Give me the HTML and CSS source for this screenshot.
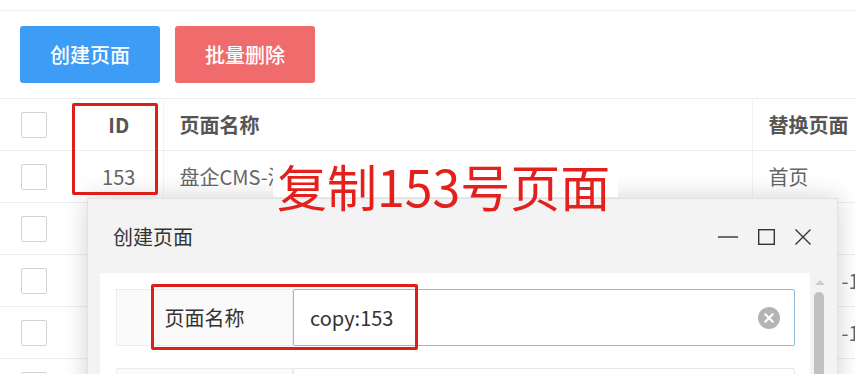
FILE: index.html
```html
<!DOCTYPE html>
<html lang="zh-CN">
<head>
<meta charset="utf-8">
<title>页面管理</title>
<link rel="stylesheet" href="styles.css">
</head>
<body>
<div class="page">
  <div class="topline"></div>
  <div class="toolbar">
    <button class="btn btn-blue">创建页面</button>
    <button class="btn btn-red">批量删除</button>
  </div>
  <table class="grid">
    <colgroup>
      <col class="c-check"><col class="c-id"><col class="c-name"><col class="c-rep">
    </colgroup>
    <thead>
      <tr>
        <th class="cell-check"><span class="checkbox"></span></th>
        <th class="cell-id">ID</th>
        <th class="cell-text">页面名称</th>
        <th class="cell-text">替换页面</th>
      </tr>
    </thead>
    <tbody>
      <tr>
        <td class="cell-check"><span class="checkbox"></span></td>
        <td class="cell-id">153</td>
        <td class="cell-text">盘企CMS-演示站首页</td>
        <td class="cell-text">首页</td>
      </tr>
      <tr>
        <td class="cell-check"><span class="checkbox"></span></td>
        <td class="cell-id">152</td>
        <td class="cell-text">盘企CMS-关于我们</td>
        <td class="cell-text">首页</td>
      </tr>
      <tr>
        <td class="cell-check"><span class="checkbox"></span></td>
        <td class="cell-id">151</td>
        <td class="cell-text">盘企CMS-新闻列表</td>
        <td class="cell-text">新闻页<span class="suffix">-1</span></td>
      </tr>
      <tr>
        <td class="cell-check"><span class="checkbox"></span></td>
        <td class="cell-id">150</td>
        <td class="cell-text">盘企CMS-产品列表</td>
        <td class="cell-text">产品页<span class="suffix">-1</span></td>
      </tr>
      <tr>
        <td class="cell-check"><span class="checkbox"></span></td>
        <td class="cell-id">149</td>
        <td class="cell-text">盘企CMS-联系我们</td>
        <td class="cell-text">首页</td>
      </tr>
    </tbody>
  </table>

  <div class="modal">
    <div class="modal-head">
      <span class="modal-title">创建页面</span>
      <div class="modal-tools">
        <svg class="tool" width="20" height="16" viewBox="0 0 20 16"><line x1="0" y1="8" x2="20" y2="8" stroke="#333" stroke-width="1.4"/></svg>
        <svg class="tool" width="17" height="16" viewBox="0 0 17 16"><rect x="0.7" y="0.7" width="15.6" height="14.6" fill="none" stroke="#333" stroke-width="1.4"/></svg>
        <svg class="tool" width="16" height="16" viewBox="0 0 16 16"><path d="M0.5 0.5 L15.5 15.5 M15.5 0.5 L0.5 15.5" stroke="#333" stroke-width="1.4"/></svg>
      </div>
    </div>
    <div class="modal-body">
      <div class="modal-content">
        <div class="form-row">
          <div class="form-label">页面名称</div>
          <div class="form-input">
            <span class="input-value">copy:153</span>
            <span class="clear-btn">
              <svg width="22" height="22" viewBox="0 0 22 22"><circle cx="11" cy="11" r="11" fill="#b4b4b4"/><path d="M7.3 7.3 L14.7 14.7 M14.7 7.3 L7.3 14.7" stroke="#fff" stroke-width="2.2" stroke-linecap="round"/></svg>
            </span>
          </div>
        </div>
        <div class="form-row">
          <div class="form-label">页面类型</div>
          <div class="form-input plain"></div>
        </div>
      </div>
      <div class="scrollbar">
        <span class="scroll-arrow"></span>
        <span class="scroll-thumb"></span>
      </div>
    </div>
  </div>

  <div class="mark mark-id"></div>
  <div class="mark mark-field"></div>
  <div class="note">复制153号页面</div>
</div>
</body>
</html>
```

FILE: styles.css
```css
* { box-sizing: border-box; }
html, body {
  margin: 0;
  padding: 0;
  background: #fff;
  overflow: hidden;
}
body {
  font-family: "Noto Sans CJK SC", "Noto Sans", sans-serif;
  color: #666;
  width: 855px;
  height: 374px;
}
.page {
  position: relative;
  width: 855px;
  height: 374px;
  overflow: hidden;
}
.topline {
  height: 11px;
  border-bottom: 1px solid #f0f0f0;
}
.toolbar {
  display: flex;
  gap: 15px;
  padding: 15px 20px 15px 20px;
}
.btn {
  width: 140px;
  height: 57px;
  border: 0;
  border-radius: 3px;
  color: #fff;
  font-family: "Noto Sans CJK SC", sans-serif;
  font-size: 20px;
  font-weight: 500;
  line-height: 57px;
  padding: 0;
}
.btn-blue { background: #3d9cf5; }
.btn-red { background: #f06c6c; }

.grid {
  width: 855px;
  table-layout: fixed;
  border-collapse: collapse;
  font-size: 20px;
}
.c-check { width: 73px; }
.c-id { width: 90px; }
.c-name { width: 589px; }
.c-rep { width: 103px; }
.grid th, .grid td {
  height: 52px;
  padding: 0;
  border-top: 1px solid #ededed;
  border-bottom: 1px solid #ededed;
  border-right: 1px solid #f3f3f3;
  white-space: nowrap;
  overflow: hidden;
  vertical-align: middle;
}
.grid th {
  color: #555;
  font-weight: 700;
  text-align: left;
}
.grid .cell-check { padding-left: 21px; border-right: 0; }
.grid .cell-id { text-align: center; padding-left: 2px; }
.grid .cell-text { padding-left: 16px; }
.suffix { margin-left: 13px; }
.checkbox {
  display: block;
  width: 26px;
  height: 26px;
  border: 1px solid #d2d2d2;
  border-radius: 2px;
  background: #fff;
}

.modal {
  position: absolute;
  left: 87px;
  top: 198px;
  width: 751px;
  height: 230px;
  background: #f3f3f4;
  border: 1px solid #e2e2e2;
  box-shadow: 0 0 24px rgba(0, 0, 0, 0.18);
}
.modal-head {
  height: 74px;
  display: flex;
  align-items: center;
  justify-content: space-between;
  padding: 0 26px 0 25px;
}
.modal-title {
  font-size: 20px;
  color: #333;
  line-height: 1;
  padding-top: 2px;
}
.modal-tools {
  display: flex;
  align-items: center;
  gap: 20px;
  padding-top: 2px;
}
.modal-body {
  display: flex;
  padding-left: 12px;
}
.modal-content {
  width: 710px;
  height: 160px;
  background: #fff;
  padding: 16px 15px 0 16px;
  display: flex;
  flex-direction: column;
  gap: 22px;
}
.form-row {
  display: flex;
  height: 57px;
}
.form-label {
  width: 177px;
  background: #fafafa;
  border: 1px solid #ececec;
  font-size: 20px;
  color: #333;
  display: flex;
  align-items: center;
  justify-content: center;
}
.form-input {
  flex: 1;
  border: 1px solid #8fb9d6;
  border-radius: 2px;
  display: flex;
  align-items: center;
  justify-content: space-between;
  padding: 0 14px 0 16px;
}
.form-input.plain { border-color: #e6e6e6; }
.input-value {
  font-size: 20px;
  color: #333;
}
.clear-btn { display: flex; }

.scrollbar {
  width: 15px;
  margin-left: 2px;
  position: relative;
}
.scroll-arrow {
  position: absolute;
  left: 3px;
  top: 7px;
  width: 0;
  height: 0;
  border-left: 5px solid transparent;
  border-right: 5px solid transparent;
  border-bottom: 5px solid #cdcdcd;
}
.scroll-thumb {
  position: absolute;
  left: 2px;
  top: 19px;
  width: 10px;
  height: 140px;
  border-radius: 5px;
  background: #c1c1c1;
}

.mark {
  position: absolute;
  border: 3px solid #dd1f1a;
  border-radius: 2px;
}
.mark-id {
  left: 72px;
  top: 103px;
  width: 86px;
  height: 92px;
}
.mark-field {
  left: 151px;
  top: 284px;
  width: 267px;
  height: 66px;
}
.note {
  position: absolute;
  left: 273px;
  top: 155px;
  height: 42px;
  padding: 5px 8px 0 4px;
  background: #fff;
  color: #e3201b;
  font-size: 50px;
  font-weight: 400;
  line-height: 50px;
  white-space: nowrap;
}
```
